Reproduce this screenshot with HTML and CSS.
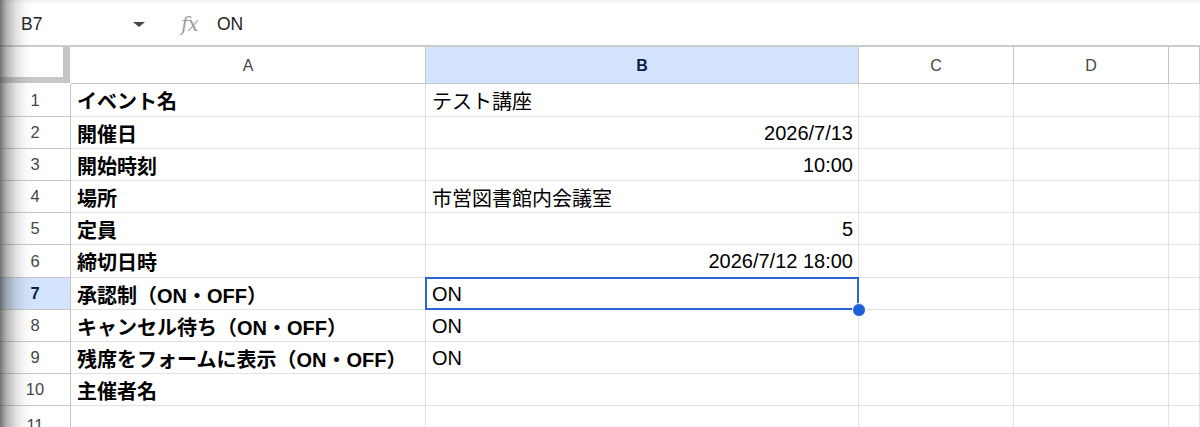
FILE: index.html
```html
<!DOCTYPE html>
<html lang="ja">
<head>
<meta charset="utf-8">
<title>Sheet</title>
<link rel="stylesheet" href="styles.css">
</head>
<body>
<div class="app">
  <div class="top-strip"></div>
  <div class="formula-bar">
    <div class="name-box">B7</div>
    <span class="caret"></span>
    <span class="fx">fx</span>
    <span class="formula-value">ON</span>
  </div>
  <div class="sheet">
    <div class="corner"></div>
    <div class="col-head">A</div>
    <div class="col-head active">B</div>
    <div class="col-head">C</div>
    <div class="col-head">D</div>
    <div class="col-head"></div>

    <div class="row-head">1</div>
    <div class="cell label">イベント名</div>
    <div class="cell">テスト講座</div>
    <div class="cell"></div><div class="cell"></div><div class="cell"></div>

    <div class="row-head">2</div>
    <div class="cell label">開催日</div>
    <div class="cell num">2026/7/13</div>
    <div class="cell"></div><div class="cell"></div><div class="cell"></div>

    <div class="row-head">3</div>
    <div class="cell label">開始時刻</div>
    <div class="cell num">10:00</div>
    <div class="cell"></div><div class="cell"></div><div class="cell"></div>

    <div class="row-head">4</div>
    <div class="cell label">場所</div>
    <div class="cell">市営図書館内会議室</div>
    <div class="cell"></div><div class="cell"></div><div class="cell"></div>

    <div class="row-head">5</div>
    <div class="cell label">定員</div>
    <div class="cell num">5</div>
    <div class="cell"></div><div class="cell"></div><div class="cell"></div>

    <div class="row-head">6</div>
    <div class="cell label">締切日時</div>
    <div class="cell num">2026/7/12 18:00</div>
    <div class="cell"></div><div class="cell"></div><div class="cell"></div>

    <div class="row-head active">7</div>
    <div class="cell label">承認制（ON・OFF）</div>
    <div class="cell selected">ON<span class="handle"></span></div>
    <div class="cell"></div><div class="cell"></div><div class="cell"></div>

    <div class="row-head">8</div>
    <div class="cell label">キャンセル待ち（ON・OFF）</div>
    <div class="cell">ON</div>
    <div class="cell"></div><div class="cell"></div><div class="cell"></div>

    <div class="row-head">9</div>
    <div class="cell label">残席をフォームに表示（ON・OFF）</div>
    <div class="cell">ON</div>
    <div class="cell"></div><div class="cell"></div><div class="cell"></div>

    <div class="row-head">10</div>
    <div class="cell label">主催者名</div>
    <div class="cell"></div>
    <div class="cell"></div><div class="cell"></div><div class="cell"></div>

    <div class="row-head">11</div>
    <div class="cell"></div>
    <div class="cell"></div>
    <div class="cell"></div><div class="cell"></div><div class="cell"></div>
  </div>
  <div class="edge-shadow"></div>
</div>
</body>
</html>
```

FILE: styles.css
```css
* { box-sizing: border-box; }

html, body {
  margin: 0;
  padding: 0;
  background: #ffffff;
  overflow: hidden;
}

body {
  font-family: "Liberation Sans", "Noto Sans CJK JP", sans-serif;
  color: #000;
}

.app {
  position: relative;
  width: 1200px;
  height: 427px;
  overflow: hidden;
}

.top-strip {
  height: 3px;
  background: #f2f5fa;
}

.formula-bar {
  height: 44px;
  display: flex;
  align-items: center;
  padding-left: 21px;
  border-bottom: 2px solid #c9cbcc;
  font-size: 17.5px;
}

.name-box {
  width: 112px;
  color: #1f1f1f;
}

.caret {
  width: 0;
  height: 0;
  border-left: 6px solid transparent;
  border-right: 6px solid transparent;
  border-top: 5px solid #444746;
  margin-top: 1px;
}

.fx {
  margin-left: 36px;
  width: 22px;
  font-family: "DejaVu Serif", "Liberation Serif", serif;
  font-style: italic;
  font-size: 20px;
  letter-spacing: -1px;
  color: #9a9ea3;
}

.formula-value {
  margin-left: 14px;
  color: #1f1f1f;
}

.sheet {
  display: grid;
  grid-template-columns: 71px 355px 433px 155px 155px 31px;
  grid-template-rows: 37px 33px 32px 32px 32px 32px 33px 32px 32px 32px 32px 40px;
}

.corner {
  border-right: 7px solid #c6c6c6;
  border-bottom: 6px solid #c6c6c6;
  background: #ffffff;
  width: 70px;
  height: 36px;
}

.col-head {
  display: flex;
  align-items: center;
  justify-content: center;
  border-right: 1px solid #c4c7c5;
  border-bottom: 1px solid #c4c7c5;
  font-size: 16px;
  color: #444746;
  padding-top: 1px;
}

.col-head.active {
  background: #d3e3fd;
  color: #0b1f4a;
  font-weight: bold;
}

.row-head {
  display: flex;
  align-items: center;
  justify-content: center;
  border-right: 1px solid #c4c7c5;
  border-bottom: 1px solid #c4c7c5;
  font-size: 16.5px;
  color: #444746;
}

.row-head.active {
  background: #d3e3fd;
  color: #0b1f4a;
  font-weight: bold;
}

.cell {
  display: flex;
  align-items: center;
  padding: 1px 5px 0 6px;
  border-right: 1px solid #e1e1e1;
  border-bottom: 1px solid #e1e1e1;
  font-size: 20px;
  white-space: nowrap;
  overflow: visible;
}

.cell.label {
  font-weight: bold;
}

.cell.num {
  justify-content: flex-end;
}

.cell.selected {
  position: relative;
}

.cell.selected::after {
  content: "";
  position: absolute;
  top: -1px;
  left: -1px;
  right: -1px;
  bottom: -1px;
  border: 2px solid #2a64d6;
  pointer-events: none;
}

.handle {
  position: absolute;
  right: -8px;
  bottom: -8px;
  width: 14px;
  height: 14px;
  border-radius: 50%;
  background: #1f5fd6;
  border: 1px solid #ffffff;
  z-index: 2;
}

.edge-shadow {
  position: absolute;
  top: 0;
  left: 0;
  width: 34px;
  height: 427px;
  pointer-events: none;
  background: linear-gradient(to right,
    rgba(60, 60, 60, 0.72) 0px,
    rgba(80, 80, 80, 0.45) 6px,
    rgba(110, 110, 110, 0.2) 16px,
    rgba(140, 140, 140, 0.05) 26px,
    rgba(255, 255, 255, 0) 34px);
}
```
